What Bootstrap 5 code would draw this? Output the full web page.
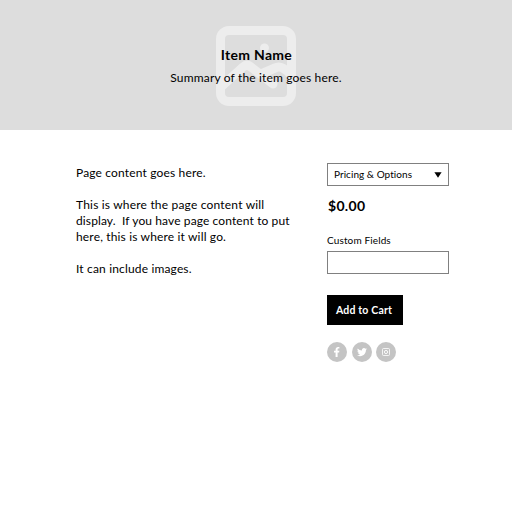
<!DOCTYPE html>
<html lang="en">
<head>
<meta charset="utf-8">
<meta name="viewport" content="width=device-width, initial-scale=1">
<title>Item Name</title>
<link href="https://cdn.jsdelivr.net/npm/bootstrap@5.3.0/dist/css/bootstrap.min.css" rel="stylesheet">
<style>
body{font:12px/16px Lato,"Noto Sans",sans-serif;color:#000;letter-spacing:.16px}
.hero{height:130px;background:#ddd}
.hero-icon{top:26px;left:216px}
.hero-title{font-size:14px;line-height:20px;font-weight:700;letter-spacing:.3px;padding:45px 0 0 1px}
.hero-text{padding-top:5px}
.page-main{padding:33px 63px 0 76px}
.page-copy{width:251px;padding-top:2px}
.page-copy span{white-space:pre}
.ls-a{letter-spacing:.19px}.ls-b{letter-spacing:.11px}
.options{width:122px}
.field{height:23px;border:1px solid #808080;border-radius:0;font-size:10px;line-height:21px;padding:0 6px;letter-spacing:.05px;background:#fff;color:#000}
.price{font-size:14px;line-height:20px;letter-spacing:.3px;margin:10px 0 0 1px}
.field-label{font-size:10px;line-height:14px;letter-spacing:.13px;margin:17px 0 4px}
.btn-cart{width:76px;height:30px;margin-top:21px;font-size:10.5px;line-height:30px;letter-spacing:.17px;padding:0 0 0 9px;text-align:left}
.social{margin-top:17px;gap:4.5px}
</style>
</head>
<body>
<header class="hero position-relative text-center">
  <svg class="hero-icon position-absolute" width="80" height="80" viewBox="0 0 80 80" fill="none" stroke="#ededed" stroke-width="9">
    <rect x="4.5" y="4.5" width="71" height="71" rx="8.500"/>
    <path d="M5 61L27 41Q31 37.500 35 41L57 58M45 48L59 42Q65 38.500 74 48" stroke-linecap="round" stroke-linejoin="round"/>
    <circle cx="48.5" cy="22" r="4.5" fill="#ededed" stroke="none"/>
  </svg>
  <h1 class="hero-title position-relative mb-0">Item Name</h1>
  <p class="hero-text position-relative mb-0">Summary of the item goes here.</p>
</header>
<main class="page-main d-flex">
  <article class="page-copy">
    <p class="mb-3">Page content goes here.</p>
    <p class="mb-3"><span class="ls-a">This is where the page content will</span><br><span class="ls-b">display.  If you have page content to put</span><br>here, this is where it will go.</p>
    <p class="mb-0">It can include images.</p>
  </article>
  <section class="options">
    <button type="button" class="field d-flex w-100 align-items-center justify-content-between">Pricing &amp; Options
      <svg width="8" height="6" viewBox="0 0 8 6"><path d="M.4.3h7.2L4 5.8z"/></svg>
    </button>
    <div class="price fw-bold">$0.00</div>
    <label class="field-label d-block" for="custom">Custom Fields</label>
    <input id="custom" type="text" class="field d-block w-100">
    <button type="button" class="btn-cart d-block border-0 rounded-0 bg-black text-white fw-bold">Add to Cart</button>
    <div class="social d-flex">
      <svg width="20" height="20" viewBox="0 0 20 20"><circle cx="10" cy="10" r="10" fill="#c4c4c4"/><path fill="#fff" d="M8.6 15v-4.4H7V8.8h1.6V7.4c0-1.6 1-2.5 2.4-2.5.7 0 1.4.1 1.4.1v1.6h-.8c-.8 0-1 .5-1 1v1.2h1.8l-.3 1.8h-1.5V15z"/></svg>
      <svg width="20" height="20" viewBox="0 0 20 20"><circle cx="10" cy="10" r="10" fill="#c4c4c4"/><path fill="#fff" transform="translate(5 5.1) scale(.625)" d="M5 14.5c6 0 9.3-5 9.3-9.3v-.4A6.6 6.6 0 0 0 16 3.1a6.600 6.600 0 0 1-1.900.5 3.300 3.300 0 0 0 1.400-1.800 6.600 6.600 0 0 1-2 .8A3.300 3.300 0 0 0 7.900 5.600 9.300 9.300 0 0 1 1.100 2.200a3.300 3.300 0 0 0 1 4.400 3.300 3.300 0 0 1-1.500-.4 3.300 3.300 0 0 0 2.600 3.200 3.300 3.300 0 0 1-1.500.1 3.300 3.300 0 0 0 3.100 2.300A6.600 6.600 0 0 1 0 13.100a9.300 9.300 0 0 0 5 1.400z"/></svg>
      <svg width="20" height="20" viewBox="0 0 20 20"><circle cx="10" cy="10" r="10" fill="#c4c4c4"/><g fill="none" stroke="#fff"><rect x="6.500" y="6.500" width="7" height="7" rx="1" stroke-width=".8"/><circle cx="10" cy="10" r="1.600" stroke-width=".9"/></g></svg>
    </div>
  </section>
</main>
<script src="https://cdn.jsdelivr.net/npm/bootstrap@5.3.0/dist/js/bootstrap.bundle.min.js"></script>
</body>
</html>
